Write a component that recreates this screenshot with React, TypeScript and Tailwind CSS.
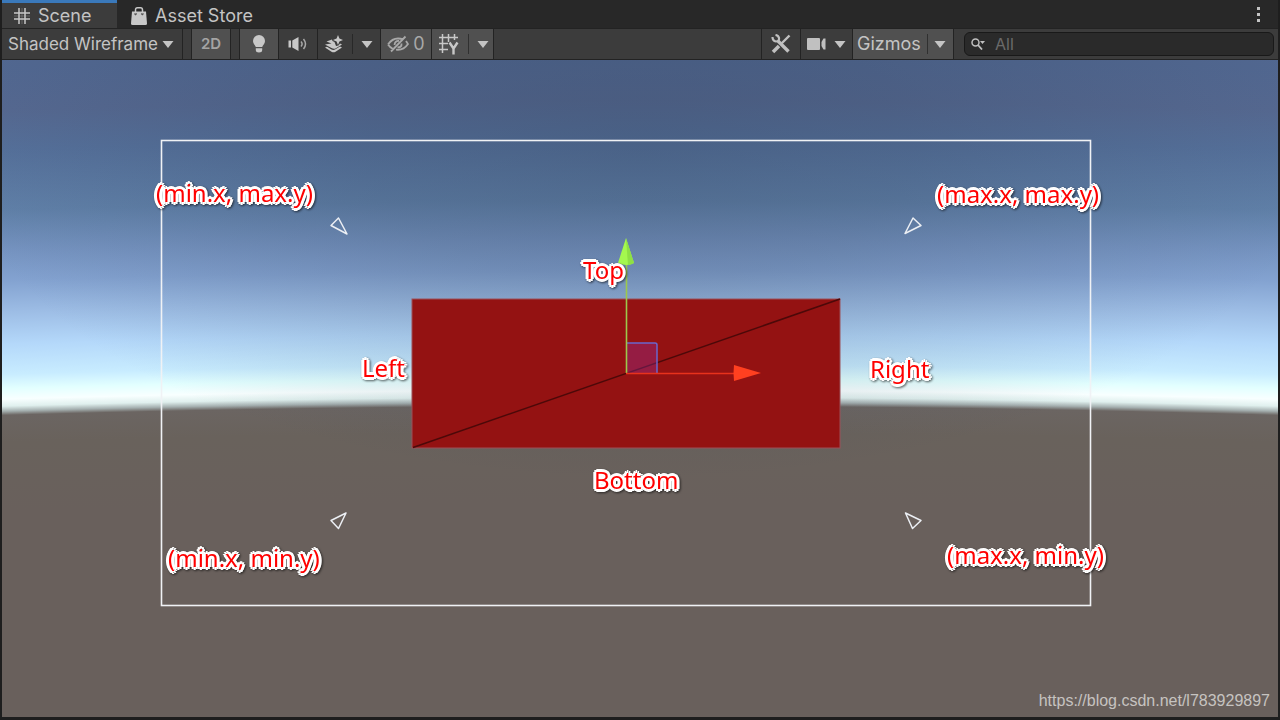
import { ReactNode, useState } from "react";

const annotations = [
  { text: "(min.x, max.y)", place: "left-[154px] top-[115px]" },
  { text: "(max.x, max.y)", place: "left-[935px] top-[116px]" },
  { text: "Top", place: "left-[581px] top-[192px]" },
  { text: "Left", place: "left-[360px] top-[290px]" },
  { text: "Right", place: "left-[868px] top-[291px]" },
  { text: "Bottom", place: "left-[592px] top-[402px]" },
  { text: "(min.x, min.y)", place: "left-[166px] top-[480px]" },
  { text: "(max.x, min.y)", place: "left-[945px] top-[477px]" },
];

function Caret() {
  return (
    <svg className="h-[7px] w-3 shrink-0" viewBox="0 0 12 7" fill="#c4c4c4" aria-hidden="true">
      <path d="M0.5 0h11L6 7z" />
    </svg>
  );
}

function GridIcon() {
  return (
    <svg className="size-4" viewBox="0 0 16 16" stroke="#c8c8c8" strokeWidth="1.5" aria-hidden="true">
      <path d="M5 0v16M11 0v16M0 5h16M0 11h16" />
      <path d="M8 0v16M0 8h16" strokeWidth="0.6" strokeOpacity="0.5" />
    </svg>
  );
}

function BagIcon() {
  return (
    <svg className="h-[18px] w-4" viewBox="0 0 16 18" aria-hidden="true">
      <path d="M4.5 6V3q0-2.200 2-2.200h3q2 0 2 2.200v3" fill="none" stroke="#c8c8c8" strokeWidth="1.5" />
      <path d="M1 4.500h14l1 12q0 1.500-1.500 1.500h-13Q0 18 0 16.500z" fill="#c8c8c8" />
      <path d="M3.500 6.500l1 1.200 1.200-1.200M10.300 6.500l1 1.200 1.200-1.200" fill="none" stroke="#555" strokeWidth="1.2" />
    </svg>
  );
}

function BulbIcon() {
  return (
    <svg className="h-5 w-4" viewBox="0 0 16 20" fill="#c8c8c8" aria-hidden="true">
      <path d="M8 1a6 6 0 0 1 6 6c0 2.600-2 4-2.800 6H4.800C4 11 2 9.600 2 7a6 6 0 0 1 6-6zM4.800 14.200h6.400V16q0 2.500-3.200 2.500T4.800 16z" />
    </svg>
  );
}

function SpeakerIcon() {
  return (
    <svg className="h-4 w-5" viewBox="0 0 20 16" fill="#c8c8c8" aria-hidden="true">
      <path d="M0.500 4.500H3v7H0.500zM4.300 4.500l6.200-3.500v14L4.300 11.500z" />
      <path d="M13 5.500q2.200 2.500 0 5M15.500 3q4 5 0 10" fill="none" stroke="#a8a8a8" strokeWidth="1.5" />
    </svg>
  );
}

function EffectsIcon() {
  return (
    <svg className="h-[18px] w-5" viewBox="0 0 20 18" fill="#c8c8c8" aria-hidden="true">
      <path d="M14 0l1.400 3.600L19 5l-3.600 1.400L14 10l-1.400-3.600L9 5l3.600-1.400z" />
      <path d="M2.500 6.500L8 4.500l.5 1.500 2 1 1.500 4 2.500-.5 1.500-2 2 1-6.500 4q-2 .8-4-.5L1 9.500l3-.5 3.500-.5z" />
      <path d="M1 12.500l2-.8 4.500 2.800q1.800.8 3.500 0l5-3 2 1-6.500 4.300q-2 1-4 0z" />
    </svg>
  );
}

function HiddenIcon() {
  return (
    <svg className="h-[18px] w-[22px]" viewBox="0 0 22 18" fill="none" stroke="#a8a8a8" strokeWidth="1.8" aria-hidden="true">
      <path d="M1 9.500Q5 3.500 11 3.500q3 0 5 1M1 9.500q2 3 5 4.500M19 6l2 3q-4 5.800-10 5.800l-2-.2M18.500 1.500L4 16.500" />
      <path d="M12 6q-4-.5-4.500 4M14.500 8.500q.5 4-4 4" />
    </svg>
  );
}

function SnapIcon() {
  return (
    <svg className="h-[22px] w-[22px]" viewBox="0 0 22 22" fill="none" stroke="#c8c8c8" aria-hidden="true">
      <path d="M4.500 1v19M10.500 1v8M16.500 1v6M1 4.500h19M1 10.500h9M1 16.500h9" strokeWidth="1.5" />
      <path d="M11.500 9.500l4 6 4-6M15.500 15v6.500" strokeWidth="2.4" />
    </svg>
  );
}

function ToolsIcon() {
  return (
    <svg className="size-5" viewBox="0 0 20 20" fill="none" stroke="#c0c0c0" aria-hidden="true">
      <path d="M7 7l10.500 10.500" strokeWidth="3.4" />
      <path d="M1.500 3Q1.500 7 5 7.500 8.500 7 8 4 7.500 1.500 4.500 1" strokeWidth="2.2" />
      <path d="M18.500 1.500L10 10" strokeWidth="2.4" />
      <path d="M8 12l-6 6" strokeWidth="3.6" />
    </svg>
  );
}

function CameraIcon() {
  return (
    <svg className="h-3.5 w-[19px]" viewBox="0 0 19 14" fill="#c0c0c0" aria-hidden="true">
      <rect y="1" width="13" height="12" rx="1" />
      <path d="M14.500 5l2-3.500H18.500v11h-2l-2-3.500z" />
    </svg>
  );
}

function SearchIcon() {
  return (
    <svg className="h-3 w-3.5 shrink-0" viewBox="0 0 14 12" fill="none" stroke="#c0c0c0" aria-hidden="true">
      <circle cx="4.500" cy="4.500" r="3.500" strokeWidth="1.5" />
      <path d="M7 7l4 4.500" strokeWidth="1.8" />
      <path d="M9 3h5l-2.500 3z" fill="#c0c0c0" stroke="none" />
    </svg>
  );
}

interface ToolProps {
  label: string;
  className: string;
  children: ReactNode;
}

function Tool({ label, className, children }: ToolProps) {
  return (
    <button
      type="button"
      aria-label={label}
      className={`flex h-full shrink-0 items-center border-r border-[#232323] ${className}`}
    >
      {children}
    </button>
  );
}

function Toolbar() {
  const [query, setQuery] = useState("");

  return (
    <div className="flex h-8 items-center border-y border-[#232323] bg-[#3c3c3c] text-lg leading-6">
      <Tool label="Shading mode" className="w-[181px] gap-1 pl-1.5 text-[17px]">
        <span>Shaded Wireframe</span>
        <Caret />
      </Tool>
      <Tool label="2D view" className="ml-2 w-10 justify-center border-l bg-[#505050] text-[15px] font-semibold text-[#a4a4a4]">
        2D
      </Tool>
      <Tool label="Lighting" className="ml-2 w-10 justify-center border-l bg-[#505050]">
        <BulbIcon />
      </Tool>
      <Tool label="Audio" className="w-[39px] justify-center">
        <SpeakerIcon />
      </Tool>
      <Tool label="Effects" className="w-[63px] gap-2 pl-1.5">
        <EffectsIcon />
        <span className="h-5 border-l border-[#282828]" />
        <Caret />
      </Tool>
      <Tool label="Hidden objects" className="w-[51px] justify-center gap-1 bg-[#505050] text-[#a8a8a8]">
        <HiddenIcon />
        <span>0</span>
      </Tool>
      <Tool label="Grid" className="w-[62px] gap-2 bg-[#505050] pl-1.5">
        <SnapIcon />
        <span className="h-5 border-l border-[#303030]" />
        <Caret />
      </Tool>

      <Tool label="Component tools" className="ml-auto w-10 justify-center border-l">
        <ToolsIcon />
      </Tool>
      <Tool label="Scene camera" className="w-[52px] justify-center gap-2">
        <CameraIcon />
        <Caret />
      </Tool>
      <Tool label="Gizmos" className="w-[101px] gap-1.5 bg-[#505050] pl-1">
        <span>Gizmos</span>
        <span className="h-5 border-l border-[#303030]" />
        <Caret />
      </Tool>
      <label className="ml-2.5 mr-1 flex h-6 w-[310px] items-center gap-2.5 rounded-md border border-[#191919] bg-[#2a2a2a] pl-1.5">
        <SearchIcon />
        <input
          type="text"
          aria-label="Search scene"
          placeholder="All"
          value={query}
          onChange={(e) => setQuery(e.target.value)}
          className="w-full min-w-0 bg-transparent text-base outline-none placeholder:text-[#6a6a6a]"
        />
      </label>
    </div>
  );
}

function SceneDrawing() {
  return (
    <svg className="absolute left-0 top-0 h-[657px] w-[1280px]" viewBox="2 60 1280 657" aria-hidden="true">
      <rect x="161.500" y="140.500" width="929" height="465" fill="none" stroke="#f0f2f5" strokeWidth="1.6" />
      <rect x="412" y="299" width="428" height="149" fill="#941212" stroke="#9c5058" strokeWidth="1" />
      <path d="M413 447.500L840 299" stroke="#4c0909" strokeWidth="1.5" />

      {/* move gizmo */}
      <rect x="627" y="343" width="30" height="30" fill="#9830a0" fillOpacity="0.35" />
      <path d="M627 343h28q2 0 2 2v28" fill="none" stroke="#6a66cc" strokeWidth="1.5" />
      <path d="M626.500 373V264" stroke="#9cc84c" strokeWidth="1.6" />
      <path d="M626 238l8 25q-8 4-16 0z" fill="#a4f84e" />
      <path d="M626 238l8 25q-3 2-6 2z" fill="#8ee044" />
      <path d="M626 373.500h108" stroke="#e8321c" strokeWidth="1.6" />
      <path d="M734 365l27 8-27 8q-1-8 0-16z" fill="#ff4020" />

      {/* camera corner markers */}
      <g fill="none" stroke="#eceff4" strokeWidth="1.5" strokeLinejoin="round">
        <path d="M338.500 218l-7.500 7.500 16 8.500z" />
        <path d="M913 218l8 7.500-16 8z" />
        <path d="M346 513l-15 7.500 7.500 8z" />
        <path d="M905.500 513l15.500 7.500-8.500 8z" />
      </g>
    </svg>
  );
}

export default function App() {
  return (
    <div className="flex min-h-screen flex-col border-l-2 border-r-2 border-b-3 border-[#1e1e1e] bg-[#282828] font-[Inter,'Liberation_Sans',sans-serif] text-[#c4c4c4]">
      <header className="flex h-7 items-center text-lg leading-6">
        <button type="button" className="flex h-full w-[115px] items-center gap-2 border-t-3 border-[#3a79bb] bg-[#3c3c3c] pl-3">
          <GridIcon />
          Scene
        </button>
        <button type="button" className="flex h-full items-center gap-2 pl-3.5 pt-[3px]">
          <BagIcon />
          Asset Store
        </button>
        <button type="button" aria-label="Window options" className="ml-auto mr-[18px] flex flex-col gap-[3px]">
          <span className="size-[3px] bg-[#c4c4c4]" />
          <span className="size-[3px] bg-[#c4c4c4]" />
          <span className="size-[3px] bg-[#c4c4c4]" />
        </button>
      </header>

      <Toolbar />

      {/* ground and sky share one very large circle, which gives the curved horizon */}
      <main className="relative flex-1 overflow-hidden bg-[radial-gradient(ellipse_680px_330px_at_50%_90px,rgba(45,62,88,0.3)_0,rgba(45,62,88,0.22)_40%,rgba(45,62,88,0)_100%),radial-gradient(circle_22400px_at_50%_22343px,#69605c_21900px,#69625c_21970px,#6b6562_21997px,#a5b0b0_22001px,#e0f0ee_22006px,#f8ffff_22013px,#e2ffff_22024px,#c8ecff_22038px,#b4d8fa_22068px,#9dbde5_22100px,#83a2d0_22132px,#7593c0_22162px,#6080a8_22202px,#55709a_22262px,#556890_22302px,#516790_22343px)]">
        <SceneDrawing />
        {annotations.map((a) => (
          <span
            key={a.text}
            className={`absolute whitespace-nowrap font-['Noto_Sans',sans-serif] text-2xl leading-9 text-[#ff0000] drop-shadow-[1px_1px_1px_rgba(0,0,0,0.6)] [text-shadow:3px_0_0_#fff,-3px_0_0_#fff,0_3px_0_#fff,0_-3px_0_#fff,2px_2px_0_#fff,-2px_2px_0_#fff,2px_-2px_0_#fff,-2px_-2px_0_#fff,1px_1px_0_#fff,-1px_-1px_0_#fff] ${a.place}`}
          >
            {a.text}
          </span>
        ))}
        <a
          href="https://blog.csdn.net/l783929897"
          className="absolute bottom-1.5 right-2 font-['Liberation_Sans',sans-serif] text-base leading-5 text-[#c6c3c0]"
        >
          https://blog.csdn.net/l783929897
        </a>
      </main>
    </div>
  );
}
